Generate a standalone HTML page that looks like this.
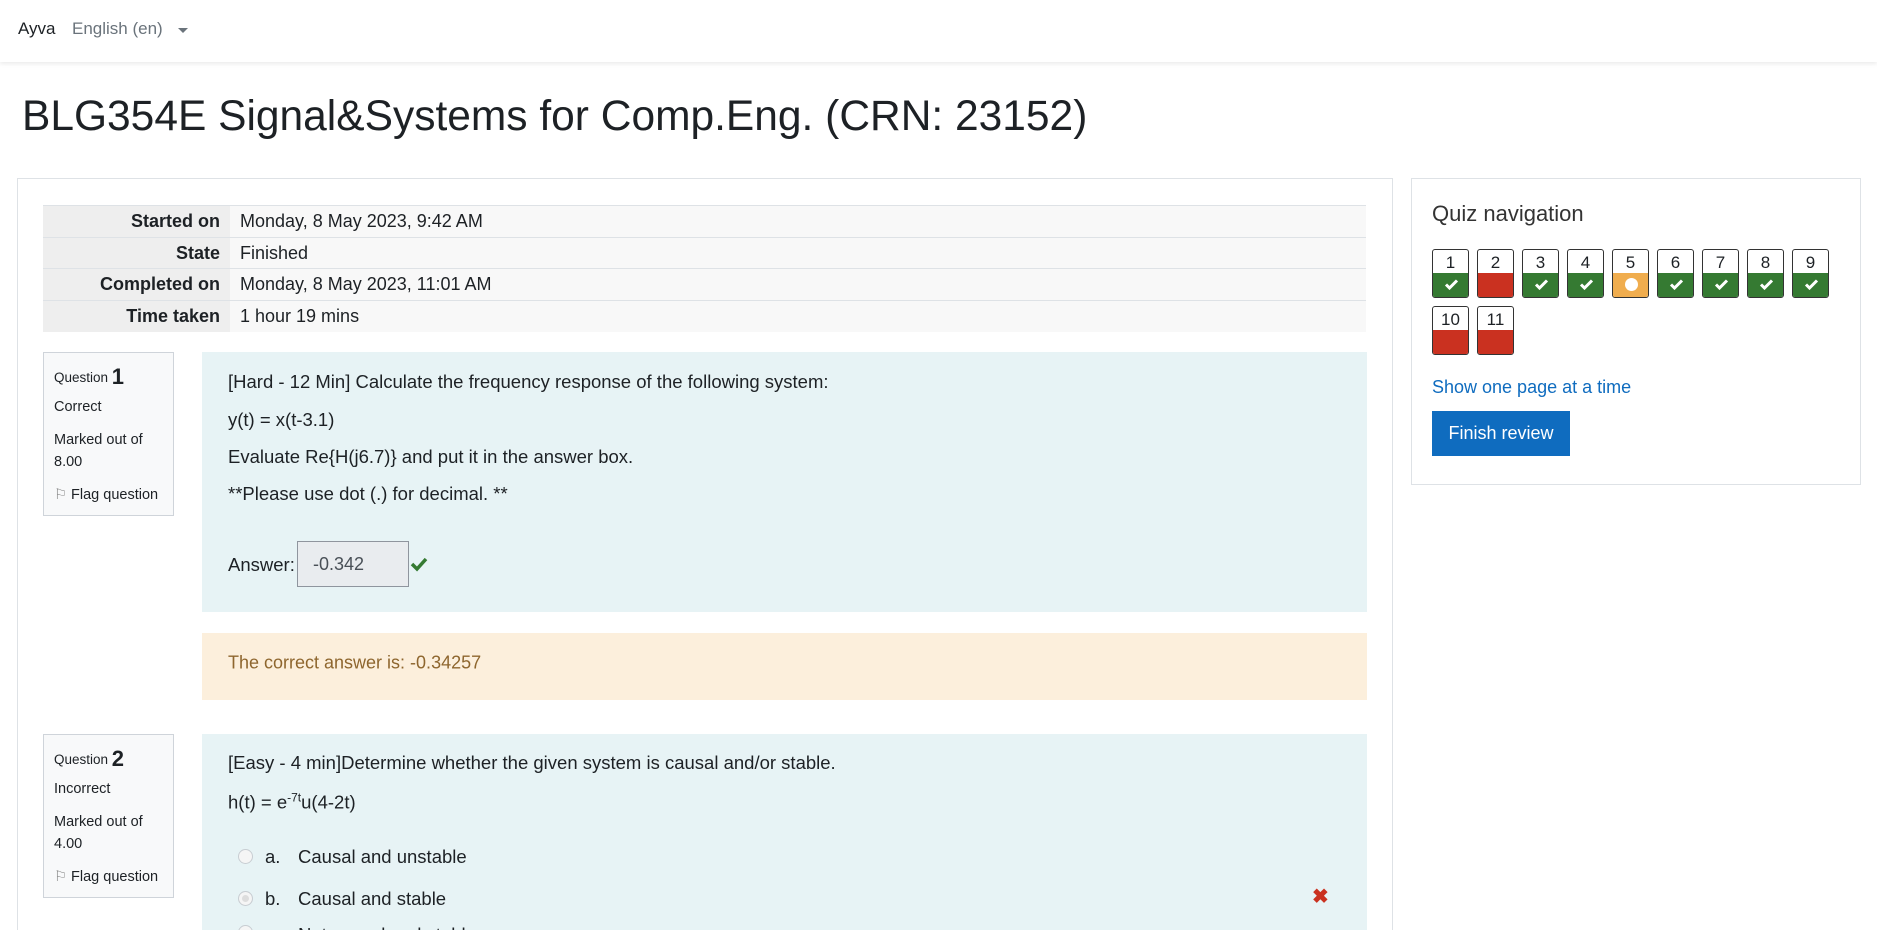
<!DOCTYPE html>
<html><head><meta charset="utf-8">
<style>
*{margin:0;padding:0;box-sizing:border-box}
html{width:1877px;height:930px;overflow:hidden}
body{width:1877px;height:930px;overflow:hidden;background:#fff;font-family:"Liberation Sans",sans-serif;color:#1d2125;position:relative}
.a{position:absolute;white-space:nowrap}
.nav{position:absolute;left:0;top:0;width:1877px;height:62px;background:#fff;box-shadow:0 2px 4px rgba(0,0,0,.08)}
.row{position:absolute;left:43px;width:1323px;height:32px;border-top:1px solid #dee2e6;font-size:18px}
.row .l{position:absolute;left:0;top:0;width:187px;height:100%;background:#eee;text-align:right;padding-right:10px;font-weight:bold;line-height:31px}
.row .v{position:absolute;left:187px;right:0;top:0;height:100%;background:#f8f8f8;padding-left:10px;line-height:31px}
.info{position:absolute;left:43px;width:131px;background:#f8f9fa;border:1px solid #cfd4da;font-size:14.5px;padding-left:10px}
.info div{position:absolute;left:10px}
.qb{position:absolute;left:202px;width:1165px;background:#e7f3f5}
.t{position:absolute;left:26px;font-size:18.5px;white-space:nowrap;transform:translateY(-50%)}
.btn{position:absolute;width:37px;height:49px;border:1px solid #333;border-radius:3px;overflow:hidden;background:#fff}
.btn span{position:absolute;top:0;left:0;width:100%;height:25px;text-align:center;font-size:17px;line-height:25px;color:#1d2125}
.btn i{position:absolute;left:0;bottom:0;width:100%;height:24px}
.g{background:#357a32}.r{background:#ca3120}.o{background:#f0ad4e}
.btn svg{position:absolute;left:11px;top:5px}
.radio{position:absolute;width:15px;height:15px;border:1px solid #c8cdd2;border-radius:50%;background:#f5f5f5}
</style></head><body>
<div class="nav">
<div class="a" style="left:18px;top:19px;font-size:17px;color:#1d2125">Ayva</div>
<div class="a" style="left:72px;top:19px;font-size:17px;color:#6a737b">English (en)</div>
<div class="a" style="left:178px;top:28px;width:0;height:0;border-left:5px solid transparent;border-right:5px solid transparent;border-top:5px solid #6a737b"></div>
</div>
<div class="a" style="left:22px;top:93px;font-size:42.5px;color:#1d2125">BLG354E Signal&amp;Systems for Comp.Eng. (CRN: 23152)</div>

<div class="a" style="left:17px;top:178px;width:1376px;height:760px;border:1px solid #dee2e6"></div>
<div class="a" style="left:1411px;top:178px;width:450px;height:307px;border:1px solid #dee2e6"></div>

<div class="row" style="top:205px"><div class="l">Started on</div><div class="v">Monday, 8 May 2023, 9:42 AM</div></div>
<div class="row" style="top:237px"><div class="l">State</div><div class="v">Finished</div></div>
<div class="row" style="top:268px"><div class="l">Completed on</div><div class="v">Monday, 8 May 2023, 11:01 AM</div></div>
<div class="row" style="top:300px"><div class="l">Time taken</div><div class="v">1 hour 19 mins</div></div>

<div class="info" style="top:352px;height:164px">
<div style="top:11px;font-size:13.5px">Question <b style="font-size:22px;vertical-align:-2px">1</b></div>
<div style="top:46px">Correct</div>
<div style="top:79px">Marked out of</div>
<div style="top:101px">8.00</div>
<div style="top:134px"><span style="color:#888">&#9872;</span> Flag question</div>
</div>
<div class="qb" style="top:352px;height:260px">
<div class="t" style="top:30px">[Hard - 12 Min] Calculate the frequency response of the following system:</div>
<div class="t" style="top:68px">y(t) = x(t-3.1)</div>
<div class="t" style="top:105px">Evaluate Re{H(j6.7)} and put it in the answer box.</div>
<div class="t" style="top:142px">**Please use dot (.) for decimal. **</div>
<div class="t" style="top:213px">Answer:</div>
<div class="a" style="left:95px;top:189px;width:112px;height:46px;border:1px solid #8f959e;background:#e9ecef;font-size:18px;line-height:44px;padding-left:15px;color:#495057">-0.342</div>
<svg class="a" style="left:208px;top:204px" width="18" height="16" viewBox="0 0 18 16"><path d="M2 8l5 5L16 3" stroke="#357a32" stroke-width="3.5" fill="none"/></svg>
</div>
<div class="qb" style="top:633px;height:67px;background:#fcefdc">
<div class="t" style="top:30px;font-size:18px;color:#8e662e">The correct answer is: -0.34257</div>
</div>

<div class="info" style="top:734px;height:164px">
<div style="top:11px;font-size:13.5px">Question <b style="font-size:22px;vertical-align:-2px">2</b></div>
<div style="top:46px">Incorrect</div>
<div style="top:79px">Marked out of</div>
<div style="top:101px">4.00</div>
<div style="top:134px"><span style="color:#888">&#9872;</span> Flag question</div>
</div>
<div class="qb" style="top:734px;height:220px">
<div class="t" style="top:29px">[Easy - 4 min]Determine whether the given system is causal and/or stable.</div>
<div class="t" style="top:68px">h(t) = e<sup style="font-size:12px">-7t</sup>u(4-2t)</div>
<div class="radio" style="left:36px;top:115px"></div>
<div class="t" style="left:63px;top:123px">a.</div><div class="t" style="left:96px;top:123px">Causal and unstable</div>
<div class="radio" style="left:36px;top:157px;background:#ddd;box-shadow:inset 0 0 0 3px #f5f5f5"></div>
<div class="t" style="left:63px;top:165px">b.</div><div class="t" style="left:96px;top:165px">Causal and stable</div>
<div class="a" style="left:1110px;top:150px;color:#ca3120;font-size:20px;font-weight:bold">&#10006;</div>
<div class="radio" style="left:36px;top:191px"></div>
<div class="t" style="left:63px;top:201px">c.</div><div class="t" style="left:96px;top:201px">Not causal and stable</div>
</div>

<div class="a" style="left:1432px;top:201px;font-size:22px;color:#333">Quiz navigation</div>
<div class="btn" style="left:1432px;top:249px"><span>1</span><i class="g"><svg width="15" height="13" viewBox="0 0 15 13"><path d="M2 6.5l3.5 3.5L13 2.5" stroke="#fff" stroke-width="3" fill="none"/></svg></i></div>
<div class="btn" style="left:1477px;top:249px"><span>2</span><i class="r"></i></div>
<div class="btn" style="left:1522px;top:249px"><span>3</span><i class="g"><svg width="15" height="13" viewBox="0 0 15 13"><path d="M2 6.5l3.5 3.5L13 2.5" stroke="#fff" stroke-width="3" fill="none"/></svg></i></div>
<div class="btn" style="left:1567px;top:249px"><span>4</span><i class="g"><svg width="15" height="13" viewBox="0 0 15 13"><path d="M2 6.5l3.5 3.5L13 2.5" stroke="#fff" stroke-width="3" fill="none"/></svg></i></div>
<div class="btn" style="left:1612px;top:249px"><span>5</span><i class="o"><svg width="15" height="15" viewBox="0 0 15 15" style="top:4px"><circle cx="7.5" cy="7.5" r="6.5" fill="#fff"/></svg></i></div>
<div class="btn" style="left:1657px;top:249px"><span>6</span><i class="g"><svg width="15" height="13" viewBox="0 0 15 13"><path d="M2 6.5l3.5 3.5L13 2.5" stroke="#fff" stroke-width="3" fill="none"/></svg></i></div>
<div class="btn" style="left:1702px;top:249px"><span>7</span><i class="g"><svg width="15" height="13" viewBox="0 0 15 13"><path d="M2 6.5l3.5 3.5L13 2.5" stroke="#fff" stroke-width="3" fill="none"/></svg></i></div>
<div class="btn" style="left:1747px;top:249px"><span>8</span><i class="g"><svg width="15" height="13" viewBox="0 0 15 13"><path d="M2 6.5l3.5 3.5L13 2.5" stroke="#fff" stroke-width="3" fill="none"/></svg></i></div>
<div class="btn" style="left:1792px;top:249px"><span>9</span><i class="g"><svg width="15" height="13" viewBox="0 0 15 13"><path d="M2 6.5l3.5 3.5L13 2.5" stroke="#fff" stroke-width="3" fill="none"/></svg></i></div>
<div class="btn" style="left:1432px;top:306px"><span>10</span><i class="r"></i></div>
<div class="btn" style="left:1477px;top:306px"><span>11</span><i class="r"></i></div>
<div class="a" style="left:1432px;top:377px;font-size:18px;color:#0f6cbf">Show one page at a time</div>
<div class="a" style="left:1432px;top:411px;width:138px;height:45px;background:#0f6cbf;color:#fff;font-size:18px;line-height:45px;text-align:center">Finish review</div>
</body></html>
